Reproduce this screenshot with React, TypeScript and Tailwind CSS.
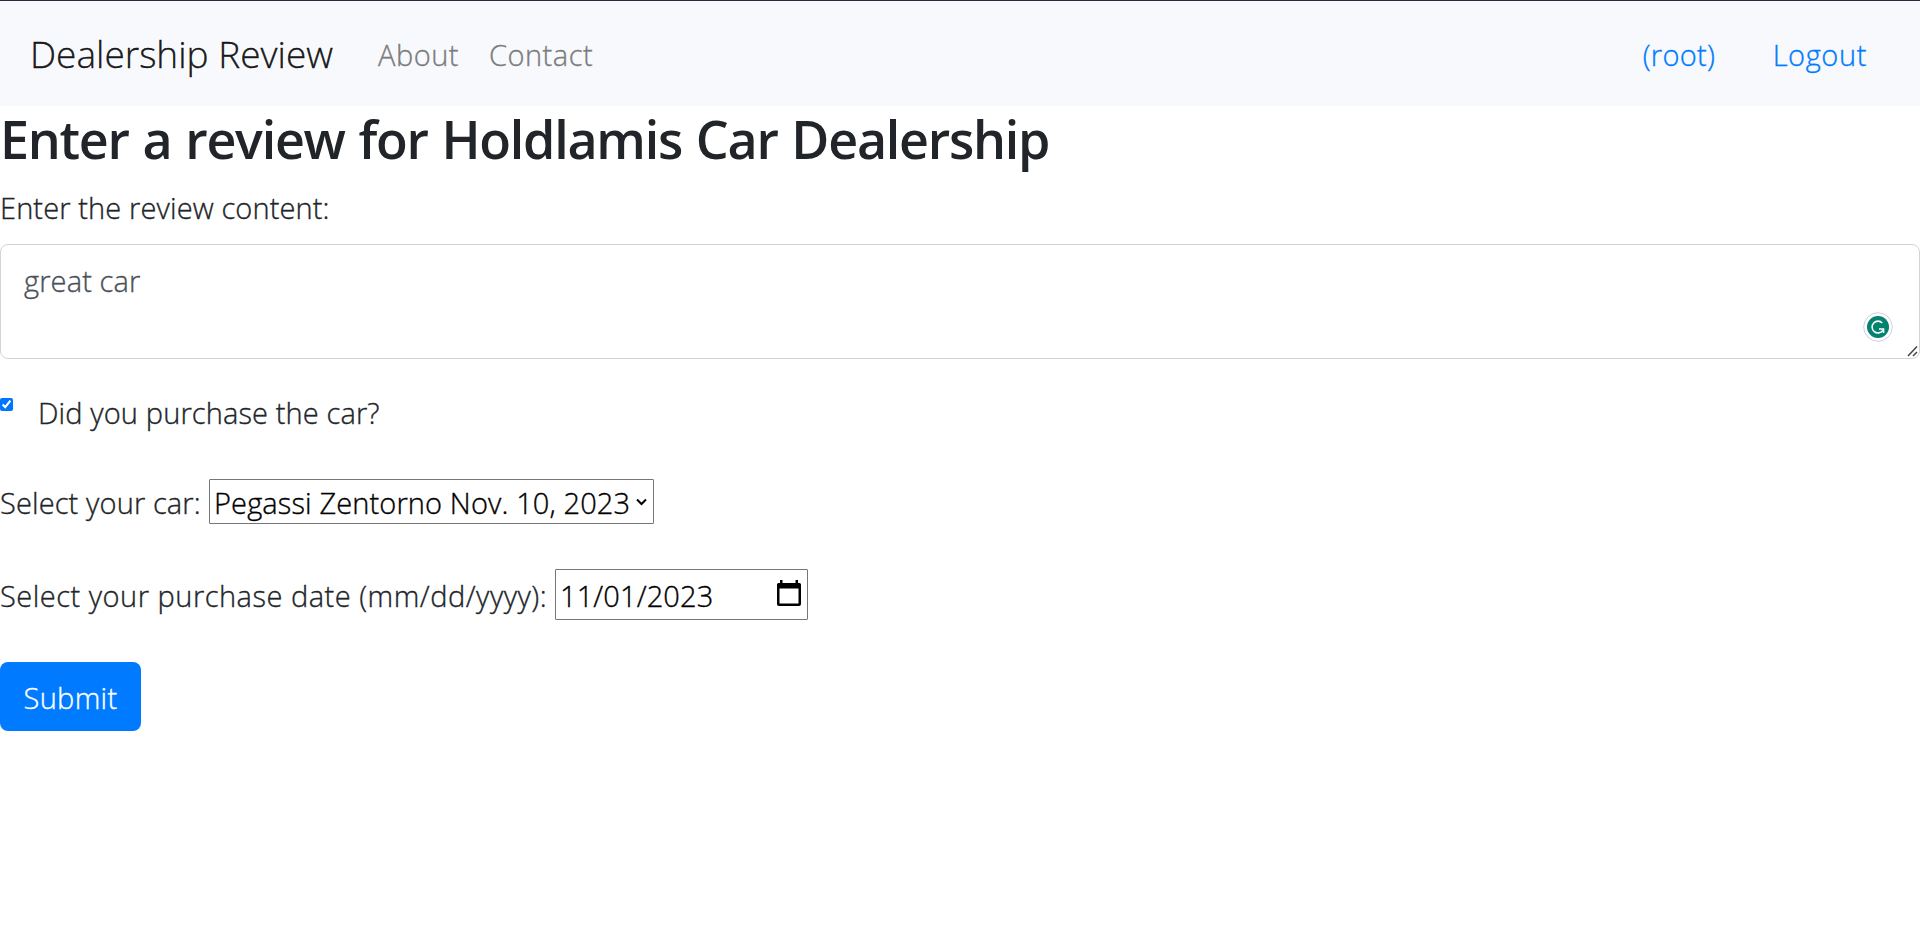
import React from "react";

function CalendarIcon() {
  return (
    <svg width="24" height="26" viewBox="0 0 24 26" className="mb-[4px] block" aria-hidden="true">
      <path d="M3 0h2.500v3H18.500V0H21v3h1.500Q24 3 24 4.500V24Q24 26 22 26H2Q0 26 0 24V4.500Q0 3 1.500 3H3ZM2.500 8.500V23.500H21.500V8.500Z" fill="#000" fillRule="evenodd" />
    </svg>
  );
}

function GrammarBadge() {
  return (
    <svg width="30" height="30" viewBox="0 0 30 30" className="block" aria-hidden="true">
      <circle cx="15" cy="15" r="14.300" fill="#fff" stroke="#cfcfe2" strokeWidth="1" />
      <circle cx="15" cy="15" r="11" fill="#02826f" />
      <path d="M19.300 11A5.900 5.900 0 1 0 19.800 18.500" fill="none" stroke="#fff" strokeWidth="1.600" />
      <path d="M20.500 21V17H16" fill="none" stroke="#fff" strokeWidth="1.600" />
    </svg>
  );
}

export default function App() {
  return (
    <div className="h-[928px] w-full overflow-hidden bg-white font-['Open_Sans','Noto_Sans',sans-serif] text-[29px] font-light leading-[45px] tracking-[0.12px] text-[#212529] [-webkit-text-stroke:0.35px_currentColor]">
      <nav className="flex h-[106px] items-center border-t border-[#2b2a3f] bg-[#f8f9fc] pl-[30px] pr-[53px]">
        <a className="w-[348px] whitespace-nowrap text-[37px] tracking-[0px] text-black/90">Dealership Review</a>
        <div className="flex flex-1 pt-[2px] tracking-[0.5px] text-[#7b7c7e]">
          <a className="w-[111px]">About</a>
          <a>Contact</a>
        </div>
        <div className="flex pt-[2px] text-[#007bff]">
          <a className="w-[130px] tracking-[0.3px]">(root)</a>
          <a className="tracking-[0.6px]">Logout</a>
        </div>
      </nav>
      <main>
        <h1 className="h-[80px] whitespace-nowrap text-[52px] font-semibold leading-[66px] tracking-[-1.25px] [-webkit-text-stroke:0] [word-spacing:1.5px]">Enter a review for Holdlamis Car Dealership</h1>
        <label className="-mt-px block h-[59px]">Enter the review content:</label>
        <div className="relative h-[116px]">
          <textarea defaultValue="great car" spellCheck={false} className="block h-[115px] w-full resize-none rounded-[8px] border border-[#ced4da] px-[23px] py-[13px] leading-[45px] text-[#495057] outline-none" />
          <div className="absolute right-[27px] top-[68px]"><GrammarBadge /></div>
          <svg className="absolute bottom-[3px] right-[1px]" width="12" height="12" viewBox="0 0 12 12" aria-hidden="true">
            <path d="M1 11L10 1.500M6 11L10 7" stroke="#444" strokeWidth="1.500" />
          </svg>
        </div>
        <div className="flex h-[119px] pt-[30px]">
          <input type="checkbox" defaultChecked className="mt-[8px] size-[13px] accent-[#0075ff]" />
          <label className="ml-[25px]">Did you purchase the car?</label>
        </div>
        <div className="flex h-[90px] items-start">
          <label className="w-[209px] whitespace-nowrap pt-[1px]">Select your car:</label>
          <div className="flex h-[45px] w-[445px] items-center justify-between rounded-[1px] border border-[#767676] pl-[4px] pr-[6px] text-black">
            <span className="whitespace-nowrap pt-[2px]">Pegassi Zentorno Nov. 10, 2023</span>
            <svg width="11" height="8" viewBox="0 0 11 8" aria-hidden="true"><path d="M1 1.500L5.500 6L10 1.500" fill="none" stroke="#000" strokeWidth="2" /></svg>
          </div>
        </div>
        <div className="flex h-[93px] items-start">
          <label className="w-[555px] whitespace-nowrap pt-[4px] tracking-[0.5px]">Select your purchase date (mm/dd/yyyy):</label>
          <div className="flex h-[51px] w-[253px] items-center justify-between rounded-[1px] border border-[#767676] pl-[4px] pr-[6px] text-black">
            <span className="pt-[2px]">11/01/2023</span>
            <CalendarIcon />
          </div>
        </div>
        <button className="block h-[69px] w-[141px] rounded-[8px] bg-[#007bff] pt-[2px] tracking-[0.3px] text-white">Submit</button>
      </main>
    </div>
  );
}
